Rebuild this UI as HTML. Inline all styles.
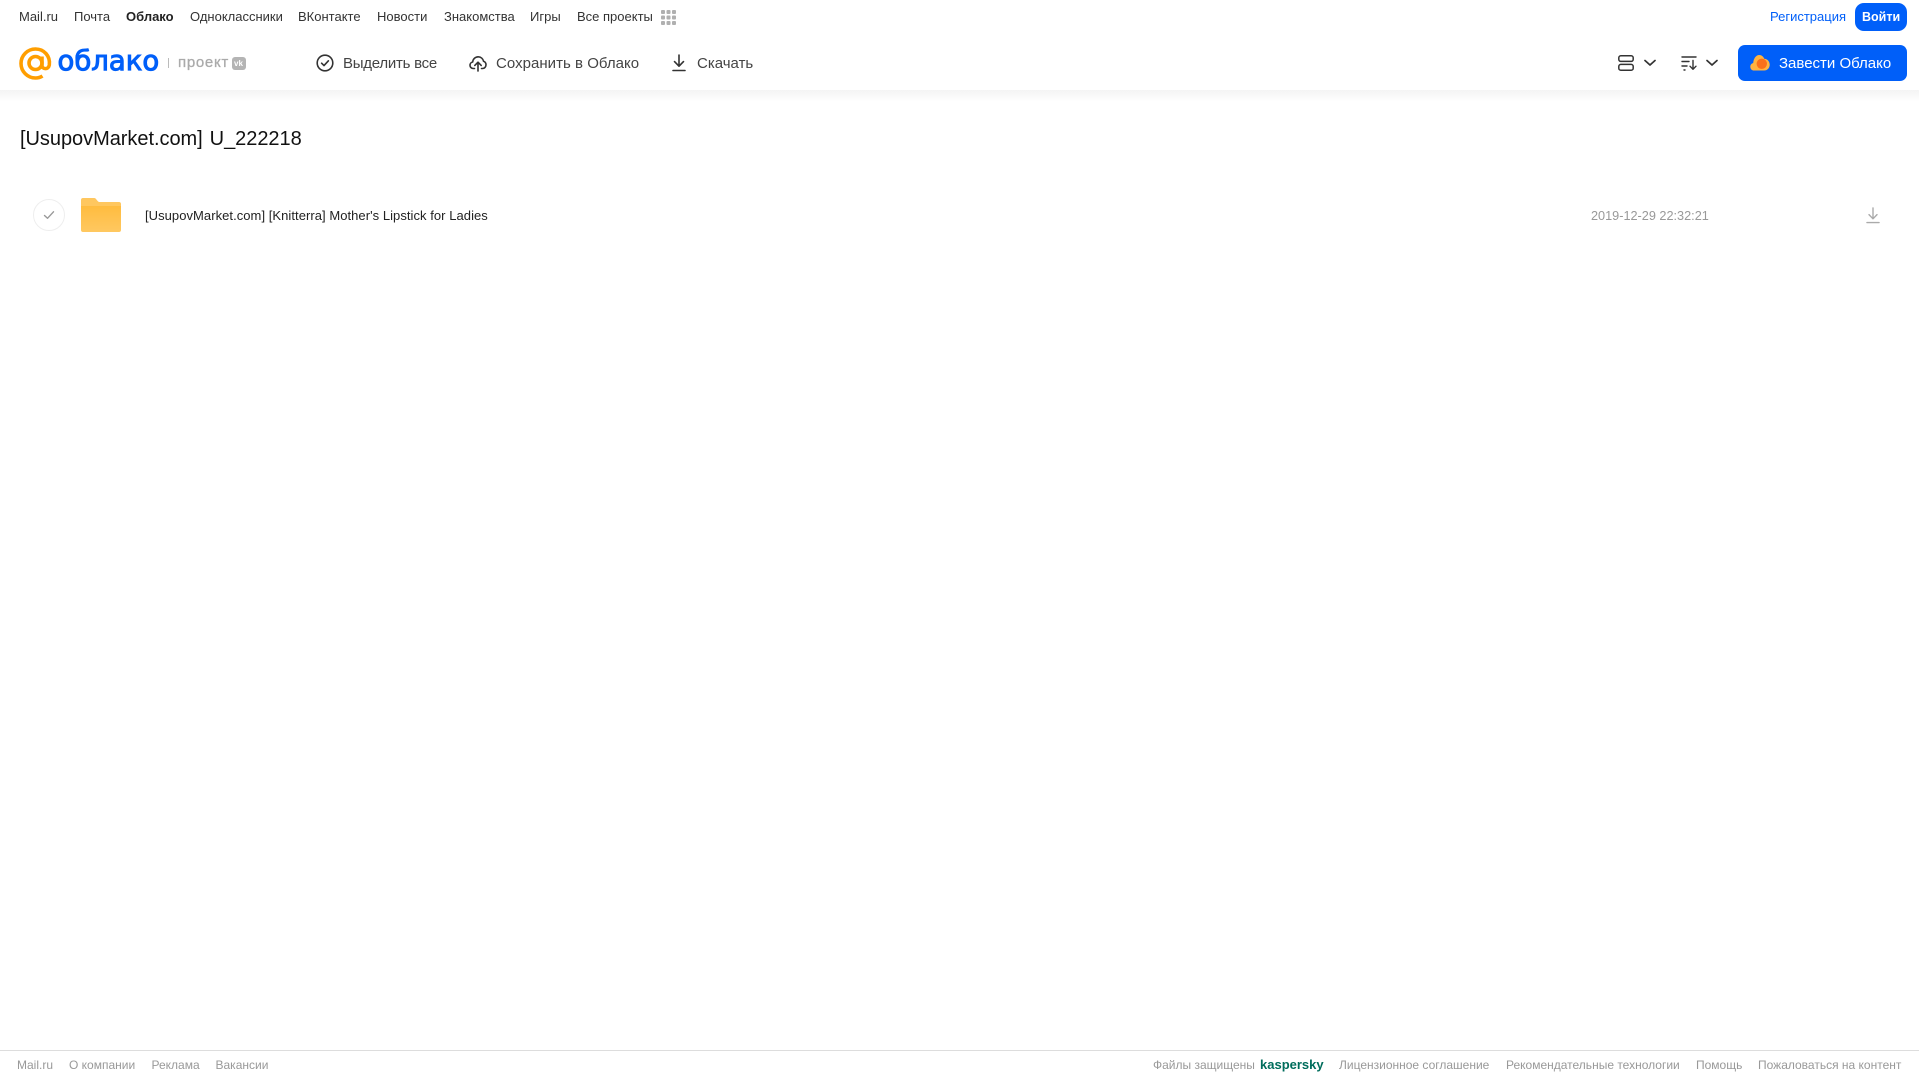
<!DOCTYPE html>
<html lang="ru">
<head>
<meta charset="utf-8">
<title>[UsupovMarket.com] U_222218</title>
<style>
html,body{margin:0;padding:0;background:#fff;width:1919px;height:1079px;overflow:hidden;font-family:"Liberation Sans",sans-serif;}
.page{position:relative;width:1919px;height:1079px;overflow:hidden;}
.t{position:absolute;white-space:nowrap;line-height:20px;height:20px;}
.nav{font-size:13px;color:#333;top:7px;}
.tool{font-size:15px;color:#444;top:54px;}
.foot{font-size:12px;color:#999;top:1055px;}
.shadow{position:absolute;left:0;top:90px;width:1919px;height:12px;background:linear-gradient(#f4f4f4,#fff);}
svg{position:absolute;overflow:visible;}
.btn{position:absolute;background:#005ff9;}
</style>
</head>
<body>
<div class="page">
<div class="shadow"></div>

<span class="t nav" style="left:19px">Mail.ru</span>
<span class="t nav" style="left:74px">Почта</span>
<span class="t nav" style="left:126px;font-weight:bold;color:#222">Облако</span>
<span class="t nav" style="left:190px">Одноклассники</span>
<span class="t nav" style="left:298px">ВКонтакте</span>
<span class="t nav" style="left:377px">Новости</span>
<span class="t nav" style="left:444px">Знакомства</span>
<span class="t nav" style="left:530px">Игры</span>
<span class="t nav" style="left:577px">Все проекты</span>
<svg style="left:661px;top:10px" width="15" height="15" viewBox="0 0 15 15" fill="#b0b0b0">
<rect x="0" y="0" width="4" height="4" rx="1"/><rect x="5.5" y="0" width="4" height="4" rx="1"/><rect x="11" y="0" width="4" height="4" rx="1"/>
<rect x="0" y="5.5" width="4" height="4" rx="1"/><rect x="5.5" y="5.5" width="4" height="4" rx="1"/><rect x="11" y="5.5" width="4" height="4" rx="1"/>
<rect x="0" y="11" width="4" height="4" rx="1"/><rect x="5.5" y="11" width="4" height="4" rx="1"/><rect x="11" y="11" width="4" height="4" rx="1"/>
</svg>

<span class="t nav" style="left:1770px;color:#005ff9">Регистрация</span>
<div class="btn" style="left:1855px;top:3px;width:52px;height:28px;border-radius:9px"></div>
<span class="t nav" style="left:1862px;color:#fff;font-weight:bold;font-size:12.5px">Войти</span>

<!-- logo -->
<svg style="left:19px;top:47px" width="33" height="33" viewBox="0 0 33 33" fill="none" stroke="#ff9e00" stroke-width="3.6">
<circle cx="16.5" cy="16" r="6.5"/>
<path d="M23 9.5V18.5C23 22.5 29.5 23 30.3 18C31.5 9 25 2 16.5 2C8.5 2 2 8.5 2 16.5C2 24.5 8.5 31 16.5 31C19.5 31 21.5 30.3 23.5 29"/>
</svg>
<span class="t" style="left:57.5px;top:43px;height:36px;line-height:36px;font-family:'DejaVu Sans',sans-serif;font-size:27.5px;color:#005ff9;-webkit-text-stroke:1px #005ff9">облако</span>
<div style="position:absolute;left:168px;top:58px;width:1px;height:10px;background:#bbb"></div>
<span class="t" style="left:178px;top:53px;font-size:15px;color:#aaa;-webkit-text-stroke:.3px #aaa;letter-spacing:.7px">проект</span>
<div style="position:absolute;left:232px;top:57px;width:14px;height:13px;border-radius:3px;background:#b4b4b4"></div>
<span class="t" style="left:234px;top:53.5px;font-size:8px;font-weight:bold;color:#fff">vk</span>

<!-- toolbar -->
<svg style="left:316px;top:54px" width="18" height="18" viewBox="0 0 18 18" fill="none" stroke="#333" stroke-width="1.6" stroke-linecap="round" stroke-linejoin="round">
<circle cx="9" cy="9" r="7.8"/><path d="M5.6 9.2L8 11.6L12.4 6.8"/>
</svg>
<span class="t tool" style="left:343px;letter-spacing:-.25px">Выделить все</span>

<svg style="left:469px;top:54px" width="18" height="18" viewBox="0 0 18 18" fill="none" stroke="#333" stroke-width="1.6" stroke-linecap="round" stroke-linejoin="round">
<path d="M5.5 14.5H4.2C2.4 14.5 1 13 1 11.2C1 9.6 2.2 8.3 3.7 8C3.9 5.2 6.2 2.8 9.2 2.8C11.9 2.8 14 4.7 14.5 7.2C16 7.7 17 9.1 17 10.8C17 12.8 15.5 14.5 13.5 14.5H12.5"/>
<path d="M9 17V8.5M5.8 11.4L9 8.2L12.2 11.4"/>
</svg>
<span class="t tool" style="left:496px;letter-spacing:.03px">Сохранить в Облако</span>

<svg style="left:672px;top:54px" width="14" height="18" viewBox="0 0 14 18" fill="none" stroke="#333" stroke-width="1.6" stroke-linecap="round" stroke-linejoin="round">
<path d="M7 1V12M2.5 7.6L7 12.2L11.5 7.6"/><path d="M1 16.5H13"/>
</svg>
<span class="t tool" style="left:697px">Скачать</span>

<!-- right tools -->
<svg style="left:1618px;top:55px" width="16" height="16" viewBox="0 0 16 16" fill="none" stroke="#333" stroke-width="1.5">
<rect x=".8" y=".8" width="14.4" height="5.6" rx="2"/><rect x=".8" y="9.4" width="14.4" height="5.8" rx="2"/>
</svg>
<svg style="left:1644px;top:59px" width="12" height="8" viewBox="0 0 12 8" fill="none" stroke="#333" stroke-width="1.7" stroke-linecap="round" stroke-linejoin="round"><path d="M1 1.5L6 6L11 1.5"/></svg>
<svg style="left:1681px;top:55px" width="16" height="16" viewBox="0 0 16 16" fill="none" stroke="#333" stroke-width="1.4" stroke-linecap="round" stroke-linejoin="round">
<path d="M1 2H15M1 6.5H8M1 11H6M3 15H4"/><path d="M12 5.5V14M9 11.2L12 14.3L15 11.2"/>
</svg>
<svg style="left:1706px;top:59px" width="12" height="8" viewBox="0 0 12 8" fill="none" stroke="#333" stroke-width="1.7" stroke-linecap="round" stroke-linejoin="round"><path d="M1 1.5L6 6L11 1.5"/></svg>

<div class="btn" style="left:1738px;top:45px;width:169px;height:36px;border-radius:7px"></div>
<svg style="left:1750px;top:54px" width="20" height="17" viewBox="0 0 20 17">
<path fill="#ffb340" d="M4 16.5C1.8 16.5 0.3 14.8 0.3 12.7C0.3 10.8 1.6 9.4 3.2 9C3.6 4.4 6 1 9.2 1C11.6 1 13.5 2.6 14.2 4.8C17.2 4.8 19.7 7.5 19.7 10.7C19.7 13.9 17.3 16.5 14.2 16.5Z"/>
<circle cx="11.8" cy="9.8" r="5.2" fill="#f9701b"/>
</svg>
<span class="t" style="left:1779px;top:54px;font-size:15px;color:#fff">Завести Облако</span>

<!-- title -->
<span class="t" style="left:20px;top:125px;height:28px;line-height:28px;font-size:20px;color:#111;word-spacing:1.5px;letter-spacing:-.04px">[UsupovMarket.com] U_222218</span>

<!-- row -->
<div style="position:absolute;left:33px;top:199px;width:30px;height:30px;border:1px solid #eee;border-radius:50%"></div>
<svg style="left:43px;top:210px" width="12" height="10" viewBox="0 0 12 10" fill="none" stroke="#999" stroke-width="1.4" stroke-linecap="round" stroke-linejoin="round"><path d="M1.5 5.5L4.5 8.3L10.5 1.8"/></svg>
<svg style="left:81px;top:198px" width="40" height="34" viewBox="0 0 40 34">
<defs><linearGradient id="f" x1="0" y1="0" x2="0" y2="1"><stop offset="0" stop-color="#ffbc3f"/><stop offset="1" stop-color="#ffc861"/></linearGradient></defs>
<path fill="#ffc75f" d="M2 0H13C14.5 0 15 1 16 2.2C17 3.4 17.5 4 19 4H38C39.2 4 40 4.8 40 6V10H0V2C0 .8 .8 0 2 0Z"/>
<path fill="url(#f)" d="M0 8H40V32C40 33.2 39.2 34 38 34H2C.8 34 0 33.2 0 32Z"/>
</svg>
<span class="t" style="left:145px;top:206px;font-size:13px;color:#222;letter-spacing:.05px">[UsupovMarket.com] [Knitterra] Mother's Lipstick for Ladies</span>
<span class="t" style="left:1591px;top:206px;font-size:12.7px;color:#999">2019-12-29 22:32:21</span>
<svg style="left:1866px;top:207px" width="14" height="17" viewBox="0 0 14 17" fill="none" stroke="#aaa" stroke-width="1.4" stroke-linecap="round" stroke-linejoin="round">
<path d="M7 1V11.5M3 7.6L7 11.8L11 7.6"/><path d="M1 15.6H13"/>
</svg>

<!-- footer -->
<div style="position:absolute;left:0;top:1050px;width:1919px;height:1px;background:#ddd"></div>
<span class="t foot" style="left:17px">Mail.ru</span>
<span class="t foot" style="left:69px">О компании</span>
<span class="t foot" style="left:151.5px">Реклама</span>
<span class="t foot" style="left:215.5px">Вакансии</span>
<span class="t foot" style="left:1153px">Файлы защищены</span>
<span class="t foot" style="left:1260px;color:#006d5c;font-weight:bold;font-size:13px">kaspersky</span>
<span class="t foot" style="left:1339px">Лицензионное соглашение</span>
<span class="t foot" style="left:1506px">Рекомендательные технологии</span>
<span class="t foot" style="left:1696px">Помощь</span>
<span class="t foot" style="left:1758px">Пожаловаться на контент</span>
</div>
</body>
</html>
